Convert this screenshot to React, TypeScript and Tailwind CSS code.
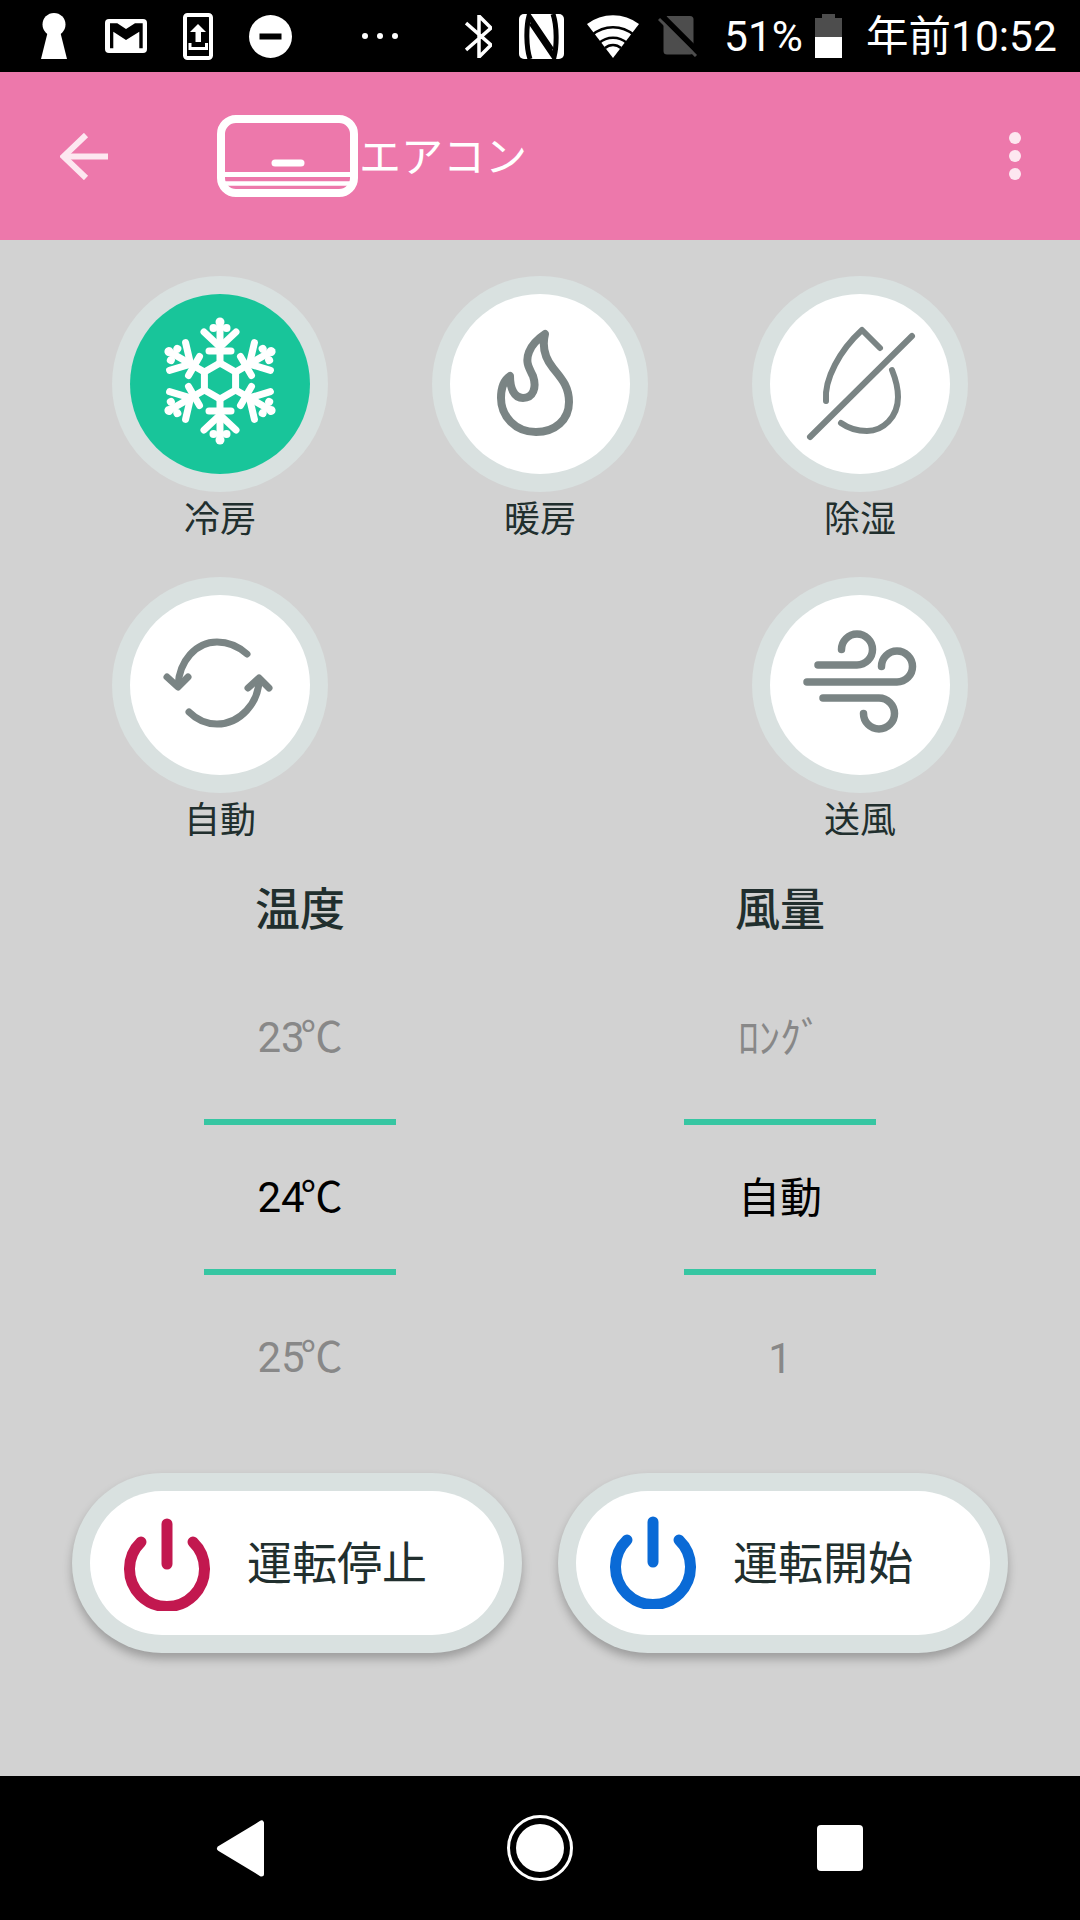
import React from 'react';

const iconGray = '#7A8484';

const Snowflake = () => (
  <svg viewBox="0 0 180 180" className="h-full w-full" fill="none" stroke="#fff" strokeWidth="7" strokeLinecap="round">
    <g transform="translate(90 87)">
      <polygon points="0,-18 15.6,-9 15.6,9 0,18 -15.6,9 -15.6,-9" strokeLinejoin="round" />
      {[0, 60, 120, 180, 240, 300].map((deg) => (
        <g key={deg} transform={`rotate(${deg})`}>
          <path d="M0 -18V-56" />
          <path d="M-11 -30H11" />
          <path d="M-16 -49L0 -34L16 -49" />
          <circle cx="0" cy="-59" r="4.5" fill="#fff" stroke="none" />
          <circle cx="-6.5" cy="-53" r="4" fill="#fff" stroke="none" />
          <circle cx="6.5" cy="-53" r="4" fill="#fff" stroke="none" />
        </g>
      ))}
    </g>
  </svg>
);

const Flame = () => (
  <svg viewBox="0 0 180 180" className="h-full w-full" fill="none" stroke={iconGray} strokeWidth="8" strokeLinejoin="round">
    <path
      transform="translate(-1 2)"
      d="M96 38C93 50 96 62 104 72C112 82 120 90 120 106C120 124 106 136 87 136C66 136 52 120 52 102C52 92 55 84 61 80C61 92 65 102 74 102C84 102 88 92 84 80C80 72 76 66 80 56C83 48 90 42 96 38Z"
    />
  </svg>
);

const NoDrop = () => (
  <svg viewBox="0 0 180 180" className="h-full w-full" fill="none" stroke={iconGray} strokeWidth="6" strokeLinecap="round" strokeLinejoin="round">
    <path d="M40 143L142 42" />
    <path d="M56 107C54 85 70 56 92 36L110 54" />
    <path d="M122 76C126 86 128 94 128 103C128 123 113 137 97 137C87 137 78 134 71 129" />
  </svg>
);

const Sync = () => (
  <svg viewBox="0 0 180 180" className="h-full w-full" fill="none" stroke={iconGray} strokeWidth="7" strokeLinecap="round" strokeLinejoin="round">
    <path d="M117 59C108 51 98 47 87 47C66 47 49 66 48 91" />
    <path d="M37 82L48 92L58 82" />
    <path d="M59 117C67 125 77 129 87 129C110 129 129 108 129 84" />
    <path d="M118 93L129 83L139 93" />
  </svg>
);

const Wind = () => (
  <svg viewBox="0 0 180 180" className="h-full w-full" fill="none" stroke={iconGray} strokeWidth="7.5" strokeLinecap="round">
    <path d="M48 70H87A15.5 15.5 0 1 0 71.5 54.5" />
    <path d="M37 87H127A15.5 15.5 0 1 0 111.5 71.5" />
    <path d="M53 103H109A15.5 15.5 0 1 1 93.5 118.5" />
  </svg>
);

const PowerIcon = ({ color, className }: { color: string; className: string }) => (
  <svg viewBox="0 0 86 93" className={className} fill="none" stroke={color} strokeWidth="11" strokeLinecap="round">
    <path d="M43 6V46" />
    <path d="M17 24A37.5 37.5 0 1 0 69 24" />
  </svg>
);

const modes = [
  { label: '冷房', icon: <Snowflake />, active: true },
  { label: '暖房', icon: <Flame /> },
  { label: '除湿', icon: <NoDrop /> },
  { label: '自動', icon: <Sync /> },
  null,
  { label: '送風', icon: <Wind /> },
];

const Deg = ({ n }: { n: number }) => (
  <span className="pb-[5px]">
    {n}
    <span className="-ml-[4px] font-['Noto_Sans_CJK_JP',sans-serif]">℃</span>
  </span>
);

const StatusBar = () => (
  <div className="flex h-[72px] items-center bg-black pl-[41px] text-[42.5px] leading-none text-white">
    {/* notification icons */}
    <svg viewBox="0 0 26 46" className="h-[46px] w-[26px]" fill="#fff">
      <circle cx="13" cy="11.5" r="11.5" />
      <path d="M7 18H19L26 46H0Z" />
    </svg>
    <svg viewBox="0 0 42 34" className="ml-[38px] h-[34px] w-[42px]">
      <rect width="42" height="34" rx="4" fill="#fff" />
      <path d="M5 4.3H12.3L21 10L30 4.3H37.7V29.3H34.3V12.7L21 21L8.3 12.7V29.3H5Z" fill="#000" />
    </svg>
    <svg viewBox="0 0 30 47" className="ml-[36px] h-[47px] w-[30px]" fill="#fff">
      <rect x="2" y="2" width="26" height="43" rx="2.5" fill="none" stroke="#fff" strokeWidth="4" />
      <path d="M15 11L23 19H18V29H12.5V19H7Z" />
      <path d="M7 30V35.5H23.5V30" fill="none" stroke="#fff" strokeWidth="3" />
    </svg>
    <svg viewBox="0 0 43 43" className="ml-[36px] h-[43px] w-[43px]">
      <circle cx="21.5" cy="21.5" r="21.5" fill="#fff" />
      <rect x="10.5" y="18.5" width="22" height="6" fill="#000" />
    </svg>
    <div className="ml-[70px] flex gap-[9px]">
      <div className="h-[6px] w-[6px] rounded-full bg-white" />
      <div className="h-[6px] w-[6px] rounded-full bg-white" />
      <div className="h-[6px] w-[6px] rounded-full bg-white" />
    </div>
    {/* system icons */}
    <svg viewBox="0 0 27 43" className="ml-[67px] h-[43px] w-[27px]" fill="none" stroke="#fff" strokeWidth="3.5">
      <path d="M1 8L26 30L14 42V1L26 13L1 35" />
    </svg>
    <svg viewBox="0 0 45 45" className="ml-[27px] h-[45px] w-[45px]" fill="none">
      <rect width="45" height="45" rx="5" fill="#fff" />
      <path d="M11 45C7 33 7 13 10 2L33 36" stroke="#000" strokeWidth="5" />
      <path d="M34 0C38 12 38 32 35 43L12 9" stroke="#000" strokeWidth="5" />
    </svg>
    <svg viewBox="0 0 52 43" className="ml-[23px] h-[43px] w-[52px]" fill="none">
      <path d="M26 43L0 9A43 43 0 0 1 52 9Z" fill="#fff" />
      <path d="M5 20A32 32 0 0 1 47 20" stroke="#000" strokeWidth="2.5" />
      <path d="M12 28A21 21 0 0 1 40 28" stroke="#000" strokeWidth="2.5" />
      <path d="M18 33A12 12 0 0 1 34 33" stroke="#000" strokeWidth="2.5" />
    </svg>
    <svg viewBox="0 0 40 41" className="ml-[19px] h-[41px] w-[40px]" fill="none">
      <path d="M9 0H32A3.5 3.5 0 0 1 35.5 3.5V35A3.5 3.5 0 0 1 32 38.5H9A3.5 3.5 0 0 1 5.5 35V3.5Z" fill="#4D4D4D" />
      <path d="M3 -1L40 36" stroke="#000" strokeWidth="6" />
      <path d="M1 3L38 40" stroke="#4D4D4D" strokeWidth="3" />
    </svg>
    <span className="mt-[3px] ml-[26px] w-[77px] whitespace-nowrap">51%</span>
    <svg viewBox="0 0 27 44" className="ml-[14px] h-[44px] w-[27px]">
      <path d="M7 0H20V4H27V23H0V4H7Z" fill="#4D4D4D" />
      <rect y="23" width="27" height="21" fill="#fff" />
    </svg>
    <span className="mt-[3px] ml-[24px] whitespace-nowrap">年前10:52</span>
  </div>
);

const Header = () => (
  <div className="flex h-[168px] items-center bg-[#ED78AB]">
    <svg viewBox="0 0 48 47" className="ml-[60px] h-[47px] w-[48px]" fill="none" stroke="#FDE7F0" strokeWidth="6">
      <path d="M48 23.5H3" />
      <path d="M26 2L3.5 23.5L26 45" />
    </svg>
    <svg viewBox="0 0 141 82" className="ml-[109px] h-[82px] w-[141px]" fill="none" stroke="#fff">
      <rect x="4" y="4" width="133" height="74" rx="15" strokeWidth="8" />
      <path d="M58 48H84" strokeWidth="7" strokeLinecap="round" />
      <path d="M4 59.5H137" strokeWidth="5" />
      <path d="M4 68.5H137" strokeWidth="4.5" />
    </svg>
    <span className="ml-[1px] pt-[4px] text-[42px] leading-none text-white">エアコン</span>
    <div className="mr-[59px] ml-auto flex flex-col gap-[6px]">
      <div className="h-[12px] w-[12px] rounded-full bg-[#FDE7F0]" />
      <div className="h-[12px] w-[12px] rounded-full bg-[#FDE7F0]" />
      <div className="h-[12px] w-[12px] rounded-full bg-[#FDE7F0]" />
    </div>
  </div>
);

const ModeButton = ({ label, icon, active }: { label: string; icon: React.ReactNode; active?: boolean }) => (
  <div className="flex w-[216px] flex-col items-center">
    <div className="h-[216px] w-[216px] rounded-full bg-[#D9E1E0] p-[18px]">
      <div className={active ? 'h-full w-full rounded-full bg-[#18C59A]' : 'h-full w-full rounded-full bg-white'}>{icon}</div>
    </div>
    <span className="flex h-[50px] items-center pt-[5px] text-[36px] text-[#212F2E]">{label}</span>
  </div>
);

const Picker = ({ title, values }: { title: string; values: React.ReactNode[] }) => (
  <div className="flex w-[192px] flex-col items-center">
    <div className="flex h-[64px] items-center pt-[3px] text-[45px] font-medium text-[#212F2E]">{title}</div>
    <div className="mt-[57px] flex h-[80px] items-center text-[42px] text-[#888888]">{values[0]}</div>
    <div className="mt-[41px] h-[6px] w-full bg-[#36C6A2]" />
    <div className="mt-[33px] flex h-[80px] items-center text-[42px] text-black">{values[1]}</div>
    <div className="mt-[31px] h-[6px] w-full bg-[#36C6A2]" />
    <div className="mt-[43px] flex h-[80px] items-center text-[42px] text-[#888888]">{values[2]}</div>
  </div>
);

const RunButton = ({ label, color, iconClass }: { label: string; color: string; iconClass: string }) => (
  <div className="h-[180px] w-[450px] rounded-full bg-[#D9E1E0] p-[18px] shadow-[0_6px_10px_rgba(0,0,0,0.25)]">
    <div className="flex h-full items-center gap-[37px] rounded-full bg-white pl-[34px]">
      <PowerIcon color={color} className={iconClass} />
      <span className="pt-[2px] text-[45px] leading-none text-[#212F2E]">{label}</span>
    </div>
  </div>
);

const NavBar = () => (
  <div className="flex h-[144px] items-center bg-black pl-[216px]">
    <svg viewBox="0 0 48 57" className="h-[57px] w-[48px]" fill="#fff" stroke="#fff" strokeWidth="5" strokeLinejoin="round">
      <path d="M3.5 28.5L45.5 3V54Z" />
    </svg>
    <div className="ml-[243px] flex h-[66px] w-[66px] items-center justify-center rounded-full border-[3px] border-white">
      <div className="h-[48px] w-[48px] rounded-full bg-white" />
    </div>
    <div className="ml-[244px] h-[46px] w-[46px] rounded-[4px] bg-white" />
  </div>
);

export default function App() {
  return (
    <div className="flex h-[1920px] w-[1080px] flex-col overflow-hidden bg-[#D2D2D2] font-[family-name:Roboto,'Noto_Sans_CJK_JP',sans-serif]">
      <StatusBar />
      <Header />
      <div className="flex h-[1536px] flex-col">
        {/* Mode buttons */}
        <div className="mt-[36px] ml-[112px] grid w-[856px] grid-cols-[216px_216px_216px] gap-x-[104px] gap-y-[35px]">
          {modes.map((m, i) => (m ? <ModeButton key={i} label={m.label} icon={m.icon} active={m.active} /> : <div key={i} />))}
        </div>
        {/* Temperature and air flow */}
        <div className="mt-[34px] ml-[204px] flex gap-[288px]">
          <Picker title="温度" values={[<Deg key="23" n={23} />, <Deg key="24" n={24} />, <Deg key="25" n={25} />]} />
          <Picker title="風量" values={['ﾛﾝｸﾞ', '自動', '1']} />
        </div>
        {/* Run buttons */}
        <div className="mt-[75px] ml-[72px] flex gap-[36px]">
          <RunButton label="運転停止" color="#C2184F" iconClass="mt-[3px] h-[93px] w-[86px]" />
          <RunButton label="運転開始" color="#0A6AD6" iconClass="-mt-[1px] h-[93px] w-[86px]" />
        </div>
      </div>
      <NavBar />
    </div>
  );
}
